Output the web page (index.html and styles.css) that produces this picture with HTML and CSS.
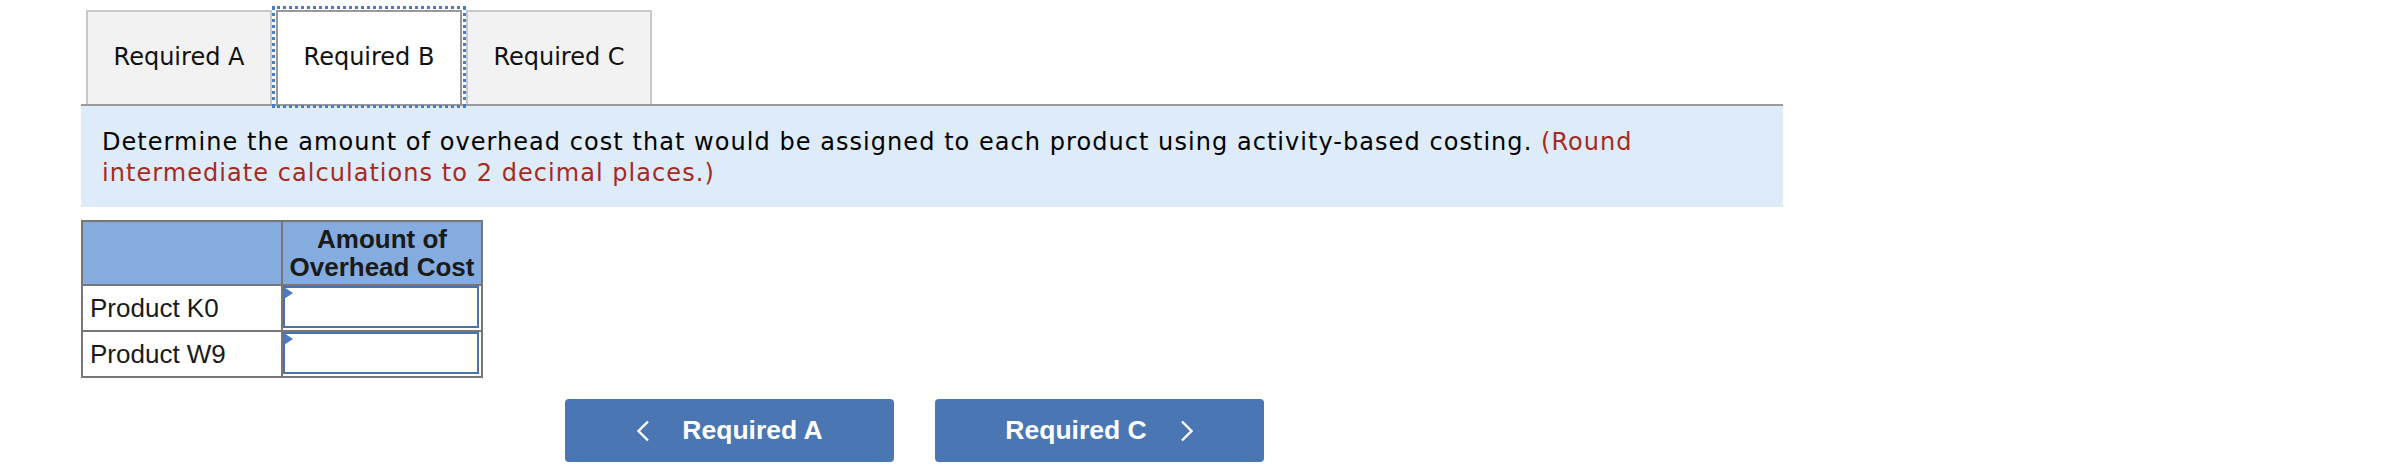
FILE: index.html
```html
<!DOCTYPE html>
<html>
<head>
<meta charset="utf-8">
<link rel="stylesheet" href="styles.css">
</head>
<body>
<div class="wrap">
  <div class="tabs">
    <div class="tab">Required A</div>
    <div class="tab active">Required B</div>
    <div class="tab">Required C</div>
  </div>
  <div class="panel">
    <p class="question">Determine the amount of overhead cost that would be assigned to each product using activity-based costing. <span class="note">(Round intermediate calculations to 2 decimal places.)</span></p>
  </div>
  <table class="grid">
    <tr class="head">
      <th class="c1"></th>
      <th class="c2">Amount of<br>Overhead Cost</th>
    </tr>
    <tr>
      <td class="label">Product K0</td>
      <td class="cell"><div class="field"><span class="flag"></span><input type="text" class="inp"></div></td>
    </tr>
    <tr>
      <td class="label">Product W9</td>
      <td class="cell"><div class="field"><span class="flag"></span><input type="text" class="inp"></div></td>
    </tr>
  </table>
  <div class="nav">
    <button class="btn"><svg class="chev" width="14" height="22" viewBox="0 0 14 22"><polyline points="12,1.5 2.5,11 12,20.5" fill="none" stroke="#fff" stroke-width="2.4"/></svg><span class="btxt left">Required A</span></button>
    <button class="btn"><span class="btxt right">Required C</span><svg class="chev" width="14" height="22" viewBox="0 0 14 22"><polyline points="2,1.5 11.5,11 2,20.5" fill="none" stroke="#fff" stroke-width="2.4"/></svg></button>
  </div>
</div>
</body>
</html>
```
FILE: styles.css
```css
html, body {
  margin: 0;
  padding: 0;
  background: #fff;
}
.wrap {
  padding-left: 81px;
  padding-top: 10px;
}
.tabs {
  display: flex;
  align-items: flex-end;
  padding-left: 5px;
  height: 94px;
}
.tab {
  box-sizing: border-box;
  height: 94px;
  width: 186px;
  margin-right: 4px;
  background: #f2f2f2;
  border: 2px solid #c9c9c9;
  border-bottom: none;
  font-family: "DejaVu Sans", Verdana, sans-serif;
  font-size: 24px;
  color: #111;
  display: flex;
  align-items: center;
  justify-content: center;
  padding-bottom: 2px;
}
.tab.active {
  background: #fff;
  border-color: #999;
  outline: 3px dotted #4a7cc4;
  outline-offset: 1px;
  position: relative;
  z-index: 2;
}
.panel {
  width: 1702px;
  box-sizing: border-box;
  border-top: 2px solid #999;
  background: #deebf8;
  padding: 21px 21px 18px 21px;
}
.question {
  margin: 0;
  font-family: "DejaVu Sans", Verdana, sans-serif;
  font-size: 24px;
  letter-spacing: 1.05px;
  line-height: 31px;
  color: #000;
}
.note {
  color: #a52a22;
}
.grid {
  margin-top: 13px;
  border-collapse: collapse;
  font-family: "Liberation Sans", Arial, sans-serif;
  font-size: 26px;
  color: #1a1a1a;
}
.grid th, .grid td {
  border: 2px solid #777;
  padding: 0;
}
.head th {
  background: #84acdf;
  height: 62px;
  font-weight: bold;
  line-height: 28px;
  text-align: center;
}
.c1 {
  width: 198px;
}
.c2 {
  width: 198px;
}
.label {
  height: 44px;
  padding-left: 7px !important;
  text-align: left;
  vertical-align: middle;
}
.cell {
  vertical-align: top;
}
.field {
  position: relative;
  height: 42px;
  width: 196px;
}
.inp {
  box-sizing: border-box;
  width: 196px;
  height: 42px;
  margin: 0;
  border: 2px solid #4a72b0;
  background: #fff;
  outline: none;
  display: block;
}
.flag {
  position: absolute;
  left: 1px;
  top: 1px;
  width: 0;
  height: 0;
  border-top: 6px solid transparent;
  border-bottom: 6px solid transparent;
  border-left: 9px solid #4a7cc4;
}
.nav {
  display: flex;
  gap: 41px;
  padding-left: 484px;
  margin-top: 21px;
}
.btn {
  box-sizing: border-box;
  width: 329px;
  height: 63px;
  border: none;
  border-radius: 4px;
  background: #4a76b4;
  color: #fff;
  display: flex;
  align-items: center;
  justify-content: center;
  padding: 0;
  font-family: "Liberation Sans", Arial, sans-serif;
  font-weight: bold;
  font-size: 26.5px;
}
.chev {
  display: block;
}
.btxt.left {
  margin-left: 32px;
}
.btxt.right {
  margin-right: 33px;
}
```
